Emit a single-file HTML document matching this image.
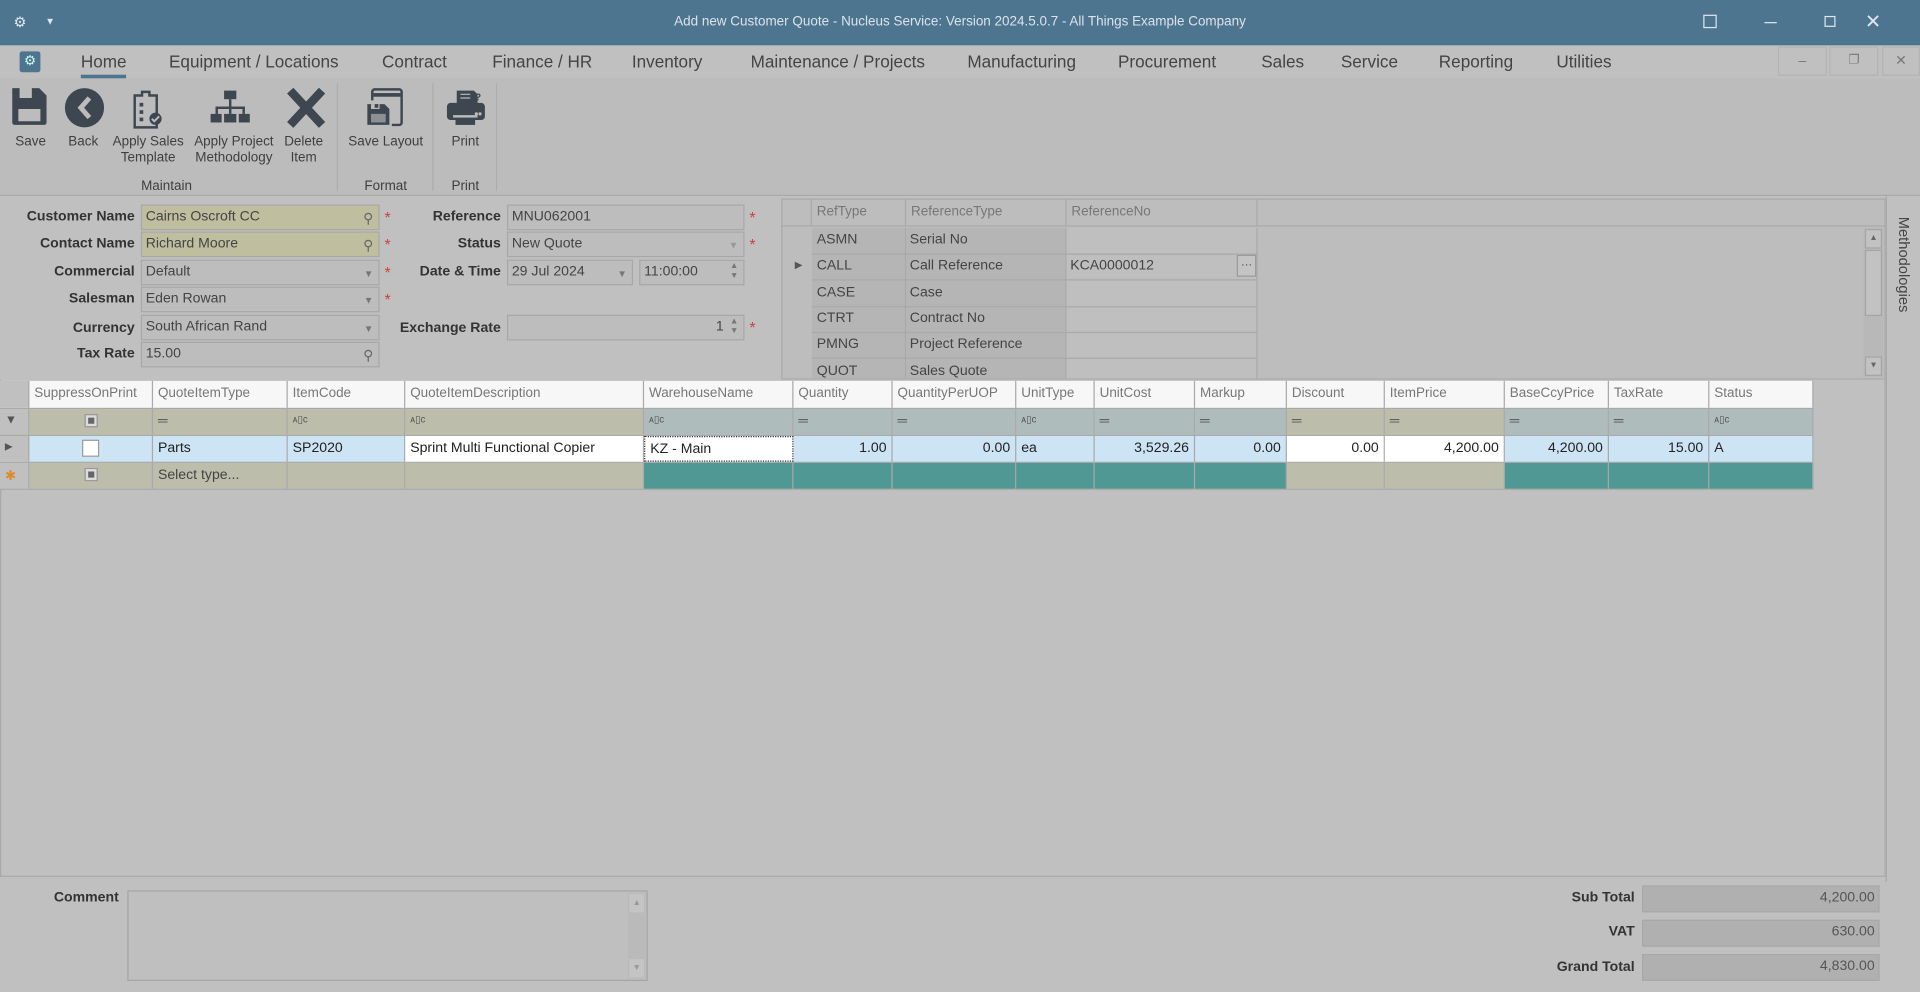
<!DOCTYPE html>
<html><head><meta charset="utf-8"><style>
*{box-sizing:border-box;margin:0;padding:0}
body{width:1920px;height:992px;overflow:hidden;background:#c0c0c0;font-family:"Liberation Sans",Tahoma,sans-serif}
#w{position:absolute;left:0;top:0;width:1568px;height:810px;transform:scale(1.22449,1.22469);transform-origin:0 0;background:#c0c0c0;color:#3a3a3a;font-size:11.5px}
.a{position:absolute}
.tab{position:absolute;top:42px;font-size:14px;color:#444}
.rb{position:absolute;text-align:center;font-size:11px;color:#3f3f3f;line-height:13px}
.lbl{position:absolute;font-weight:bold;text-align:right;width:110px;font-size:11.5px;color:#333}
.lbr{position:absolute;font-weight:bold;text-align:right;font-size:11.5px;color:#333}
.in{position:absolute;height:21px;border:1px solid #a8a8a8;background:#bdbdbd;padding:3px 3px;font-size:11.5px;color:#444;white-space:nowrap}
.ast{position:absolute;color:#d04040;font-size:13px}
.c{position:absolute;height:100%;border-right:1px solid #a9a9a9;padding:4px 4px;white-space:nowrap;overflow:hidden}
.row{position:absolute;left:0;width:1481px}
.r{text-align:right}
.sep{position:absolute;width:1px;background:#adadad}
</style></head><body><div id="w">
<!-- title bar -->
<div class="a" style="left:0;top:0;width:1568px;height:37px;background:#4e7590"></div>
<div class="a" style="left:11px;top:11px;color:#dfe6ec;font-size:12px">⚙</div>
<div class="a" style="left:37px;top:13px;color:#dfe6ec;font-size:8px">▼</div>
<div class="a" style="left:0;top:12px;width:1568px;text-align:center;color:#dbe3ea;font-size:11px">Add new Customer Quote - Nucleus Service: Version 2024.5.0.7 - All Things Example Company</div>
<div class="a" style="left:1391px;top:12px;width:11px;height:11px;border:1px solid #dfe6ec"></div>
<div class="a" style="left:1441px;top:18px;width:10px;height:1px;background:#dfe6ec"></div>
<div class="a" style="left:1490px;top:13px;width:9px;height:9px;border:1px solid #dfe6ec"></div>
<div class="a" style="left:1523px;top:8px;color:#dfe6ec;font-size:16px">✕</div>
<!-- tabs -->
<div class="a" style="left:16px;top:42px;width:17px;height:17px;background:#4e7590;border-radius:2px;color:#cfe;font-size:11px;text-align:center;line-height:17px">⚙</div>
<div class="tab" style="left:66px">Home</div>
<div class="a" style="left:66px;top:61px;width:37px;height:3px;background:#4e7590"></div>
<div class="tab" style="left:138px">Equipment / Locations</div>
<div class="tab" style="left:312px">Contract</div>
<div class="tab" style="left:402px">Finance / HR</div>
<div class="tab" style="left:516px">Inventory</div>
<div class="tab" style="left:613px">Maintenance / Projects</div>
<div class="tab" style="left:790px">Manufacturing</div>
<div class="tab" style="left:913px">Procurement</div>
<div class="tab" style="left:1030px">Sales</div>
<div class="tab" style="left:1095px">Service</div>
<div class="tab" style="left:1175px">Reporting</div>
<div class="tab" style="left:1271px">Utilities</div>
<div class="a" style="left:1452px;top:38px;width:40px;height:24px;border:1px solid #b3b3b3;text-align:center;line-height:22px;color:#777">–</div>
<div class="a" style="left:1494px;top:38px;width:40px;height:24px;border:1px solid #b3b3b3;text-align:center;line-height:22px;color:#777;font-size:10px">❐</div>
<div class="a" style="left:1537px;top:38px;width:31px;height:24px;border:1px solid #b3b3b3;text-align:center;line-height:22px;color:#777">✕</div>
<!-- ribbon -->
<div class="a" style="left:0;top:64px;width:1568px;height:96px;background:#bcbcbc"></div>
<svg class="a" style="left:0;top:64px" width="420" height="50" viewBox="0 0 420 50">
<g fill="#3e4750">
<path d="M10 8h22l6 6v22a2 2 0 0 1-2 2H12a2 2 0 0 1-2-2zM16 8v8h10v-8zM15 25v10h18V25z" fill-rule="evenodd"/>
<circle cx="69" cy="24" r="16"/>
<path d="M110 14h6v-3h6v3h6v26h-18z" fill="none" stroke="#3e4750" stroke-width="2"/>
<rect x="114" y="20" width="3" height="3"/><rect x="114" y="26" width="3" height="3"/><rect x="114" y="32" width="3" height="3"/>
<circle cx="127" cy="33" r="5"/>
<rect x="183" y="10" width="10" height="7"/><rect x="187" y="17" width="2" height="6"/><rect x="176" y="23" width="24" height="2"/>
<rect x="176" y="23" width="2" height="6"/><rect x="187" y="23" width="2" height="6"/><rect x="198" y="23" width="2" height="6"/>
<rect x="172" y="29" width="9" height="7"/><rect x="183" y="29" width="10" height="7"/><rect x="195" y="29" width="9" height="7"/>
</g>
<path d="M73 16l-7 8 7 8" stroke="#bcbcbc" stroke-width="4" fill="none"/>
<path d="M124 33l2 2 4-4" stroke="#bcbcbc" stroke-width="1.6" fill="none"/>
<path d="M237 10l26 28M263 10l-26 28" stroke="#3e4750" stroke-width="7"/>
<!-- save layout -->
<path d="M304 18v-7a2 2 0 0 1 2-2h20a2 2 0 0 1 2 2v25a2 2 0 0 1-2 2h-6" fill="none" stroke="#3e4750" stroke-width="2"/>
<rect x="305" y="12" width="22" height="3" fill="#3e4750"/>
<path d="M300 21h14l4 4v13h-18z" fill="#3e4750"/>
<rect x="303" y="21" width="7" height="4" fill="#bcbcbc"/><rect x="306" y="21" width="3" height="3" fill="#3e4750"/>
<rect x="303" y="29" width="12" height="7" fill="#8a9096"/>
<!-- print -->
<path d="M373 10h14l3 3v8h-17z" fill="#3e4750"/>
<path d="M376 13h8M376 16h8" stroke="#bcbcbc" stroke-width="1"/>
<text x="388" y="18" font-size="8" font-weight="bold" fill="#3e4750" font-family="Liberation Sans">?</text>
<rect x="365" y="20" width="31" height="14" rx="3" fill="#3e4750"/>
<circle cx="389" cy="29" r="1.3" fill="#bcbcbc"/><circle cx="392" cy="29" r="1.3" fill="#bcbcbc"/>
<rect x="370" y="30" width="20" height="2" fill="#bcbcbc"/>
<rect x="372" y="33" width="16" height="5" fill="#3e4750"/>
</svg>
<div class="rb" style="left:5px;top:110px;width:40px">Save</div>
<div class="rb" style="left:48px;top:110px;width:40px">Back</div>
<div class="rb" style="left:88px;top:110px;width:66px">Apply Sales<br>Template</div>
<div class="rb" style="left:154px;top:110px;width:74px">Apply Project<br>Methodology</div>
<div class="rb" style="left:226px;top:110px;width:44px">Delete<br>Item</div>
<div class="rb" style="left:278px;top:110px;width:74px">Save Layout</div>
<div class="rb" style="left:358px;top:110px;width:44px">Print</div>
<div class="rb" style="left:100px;top:146px;width:72px">Maintain</div>
<div class="rb" style="left:278px;top:146px;width:74px">Format</div>
<div class="rb" style="left:358px;top:146px;width:44px">Print</div>
<div class="sep" style="left:275px;top:68px;height:88px"></div>
<div class="sep" style="left:353px;top:68px;height:88px"></div>
<div class="sep" style="left:405px;top:68px;height:88px"></div>
<div class="a" style="left:0;top:159px;width:1568px;height:1px;background:#a9a9a9"></div>
<!-- form -->
<div class="lbl" style="left:0;top:171px">Customer Name</div>
<div class="lbl" style="left:0;top:193px">Contact Name</div>
<div class="lbl" style="left:0;top:216px">Commercial</div>
<div class="lbl" style="left:0;top:238px">Salesman</div>
<div class="lbl" style="left:0;top:262px">Currency</div>
<div class="lbl" style="left:0;top:283px">Tax Rate</div>
<div class="in" style="left:115px;top:167px;width:195px;background:#bfbe9f">Cairns Oscroft CC<span style="position:absolute;right:4px;color:#666">⚲</span></div>
<div class="in" style="left:115px;top:189px;width:195px;background:#bfbe9f">Richard Moore<span style="position:absolute;right:4px;color:#666">⚲</span></div>
<div class="in" style="left:115px;top:212px;width:195px">Default<span style="position:absolute;right:4px;color:#777;font-size:8px;top:6px">▼</span></div>
<div class="in" style="left:115px;top:234px;width:195px">Eden Rowan<span style="position:absolute;right:4px;color:#777;font-size:8px;top:6px">▼</span></div>
<div class="in" style="left:115px;top:257px;width:195px">South African Rand<span style="position:absolute;right:4px;color:#777;font-size:8px;top:6px">▼</span></div>
<div class="in" style="left:115px;top:279px;width:195px">15.00<span style="position:absolute;right:4px;color:#666">⚲</span></div>
<div class="ast" style="left:314px;top:170px">*</div><div class="ast" style="left:314px;top:192px">*</div><div class="ast" style="left:314px;top:215px">*</div><div class="ast" style="left:314px;top:237px">*</div>
<div class="lbr" style="left:300px;width:109px;top:171px">Reference</div>
<div class="lbr" style="left:300px;width:109px;top:193px">Status</div>
<div class="lbr" style="left:300px;width:109px;top:216px">Date &amp; Time</div>
<div class="lbr" style="left:300px;width:109px;top:262px">Exchange Rate</div>
<div class="in" style="left:414px;top:167px;width:194px">MNU062001</div>
<div class="in" style="left:414px;top:189px;width:194px">New Quote<span style="position:absolute;right:4px;color:#999;font-size:8px;top:6px">▼</span></div>
<div class="in" style="left:414px;top:212px;width:103px">29 Jul 2024<span style="position:absolute;right:4px;color:#777;font-size:8px;top:6px">▼</span></div>
<div class="in" style="left:522px;top:212px;width:86px">11:00:00<span style="position:absolute;right:4px;color:#777;font-size:7px;top:1px;line-height:8px">▲<br>▼</span></div>
<div class="in" style="left:414px;top:257px;width:194px;text-align:right;padding-right:16px">1<span style="position:absolute;right:4px;color:#777;font-size:7px;top:1px;line-height:8px">▲<br>▼</span></div>
<div class="ast" style="left:612px;top:170px">*</div><div class="ast" style="left:612px;top:192px">*</div><div class="ast" style="left:612px;top:260px">*</div>
<!-- ref grid -->
<div class="a" style="left:638px;top:162px;width:902px;height:148px;border:1px solid #a9a9a9;background:#bdbdbd"></div>
<div class="a" style="left:639px;top:163px;width:900px;height:22px;border-bottom:1px solid #a9a9a9;color:#777;font-size:11px">
<div class="c" style="left:0;width:24px"></div><div class="c" style="left:24px;width:77px">RefType</div><div class="c" style="left:101px;width:131px">ReferenceType</div><div class="c" style="left:232px;width:156px">ReferenceNo</div></div>
<div class="a" style="left:663px;top:186px;width:364px;height:123px">
<div style="position:absolute;left:0;top:0;width:207px;height:123px;background:#b5b5b5"></div>
<div style="position:absolute;left:207px;top:0;width:157px;height:123px;background:#bfbfbf"></div>
</div>
<div class="a" style="left:663px;top:186px;font-size:11.5px;color:#444;line-height:21.5px">
<div class="a" style="left:4px;top:0">ASMN</div><div class="a" style="left:80px;top:0;white-space:nowrap">Serial No</div>
<div class="a" style="left:4px;top:21px">CALL</div><div class="a" style="left:80px;top:21px;white-space:nowrap">Call Reference</div><div class="a" style="left:211px;top:21px">KCA0000012</div>
<div class="a" style="left:4px;top:43px">CASE</div><div class="a" style="left:80px;top:43px">Case</div>
<div class="a" style="left:4px;top:64px">CTRT</div><div class="a" style="left:80px;top:64px;white-space:nowrap">Contract No</div>
<div class="a" style="left:4px;top:85px">PMNG</div><div class="a" style="left:80px;top:85px;white-space:nowrap">Project Reference</div>
<div class="a" style="left:4px;top:107px">QUOT</div><div class="a" style="left:80px;top:107px;white-space:nowrap">Sales Quote</div>
</div>
<div class="a" style="left:663px;top:207px;width:364px;height:1px;background:#a9a9a9"></div>
<div class="a" style="left:663px;top:228px;width:364px;height:1px;background:#a9a9a9"></div>
<div class="a" style="left:663px;top:250px;width:364px;height:1px;background:#a9a9a9"></div>
<div class="a" style="left:663px;top:271px;width:364px;height:1px;background:#a9a9a9"></div>
<div class="a" style="left:663px;top:292px;width:364px;height:1px;background:#a9a9a9"></div>
<div class="a" style="left:739px;top:186px;width:1px;height:123px;background:#a9a9a9"></div>
<div class="a" style="left:870px;top:186px;width:1px;height:123px;background:#a9a9a9"></div>
<div class="a" style="left:1026px;top:186px;width:1px;height:123px;background:#a9a9a9"></div>
<div class="a" style="left:649px;top:212px;font-size:8px;color:#555">▶</div>
<div class="a" style="left:1010px;top:208px;width:16px;height:18px;border:1px solid #999;background:#c4c4c4;font-size:9px;text-align:center;line-height:14px">···</div>
<div class="a" style="left:1522px;top:186px;width:16px;height:122px;background:#b8b8b8"></div>
<div class="a" style="left:1523px;top:187px;width:14px;height:16px;border:1px solid #a5a5a5;background:#c2c2c2;font-size:7px;text-align:center;line-height:14px;color:#666">▲</div>
<div class="a" style="left:1523px;top:204px;width:14px;height:54px;border:1px solid #a5a5a5;background:#c2c2c2"></div>
<div class="a" style="left:1523px;top:291px;width:14px;height:16px;border:1px solid #a5a5a5;background:#c2c2c2;font-size:7px;text-align:center;line-height:14px;color:#666">▼</div>
<!-- methodologies -->
<div class="a" style="left:1540px;top:160px;width:28px;height:560px;border-left:1px solid #a9a9a9;background:#c0c0c0"></div>
<div class="a" style="left:1548px;top:177px;writing-mode:vertical-rl;font-size:12px;color:#444">Methodologies</div>
<!-- main grid -->
<div class="a" style="left:0;top:310px;width:1540px;height:406px;border:1px solid #a9a9a9;border-top:none;background:#c0c0c0"></div>
<div class="row" style="top:311px;height:23px;background:#f7f7f7;color:#777;font-size:11px;border-bottom:1px solid #a9a9a9">
<div class="c" style="left:0;width:24px;background:#c0c0c0"></div>
<div class="c" style="left:24px;width:101px">SuppressOnPrint</div><div class="c" style="left:125px;width:110px">QuoteItemType</div><div class="c" style="left:235px;width:96px">ItemCode</div><div class="c" style="left:331px;width:195px">QuoteItemDescription</div><div class="c" style="left:526px;width:122px">WarehouseName</div><div class="c" style="left:648px;width:81px">Quantity</div><div class="c" style="left:729px;width:101px">QuantityPerUOP</div><div class="c" style="left:830px;width:64px">UnitType</div><div class="c" style="left:894px;width:82px">UnitCost</div><div class="c" style="left:976px;width:75px">Markup</div><div class="c" style="left:1051px;width:80px">Discount</div><div class="c" style="left:1131px;width:98px">ItemPrice</div><div class="c" style="left:1229px;width:85px">BaseCcyPrice</div><div class="c" style="left:1314px;width:82px">TaxRate</div><div class="c" style="left:1396px;width:85px">Status</div></div>
<div class="row" style="top:334px;height:22px;border-bottom:1px solid #a9a9a9;font-size:11px;color:#555">
<div class="c" style="left:0;width:24px;background:#c0c0c0;font-size:10px">▼</div>
<div class="c" style="left:24px;width:101px;background:#bdbdac;text-align:center"><span style="display:inline-block;width:11px;height:11px;border:1px solid #999;background:#ddd;box-shadow:inset 0 0 0 2px #ddd,inset 0 0 0 6px #666"></span></div>
<div class="c" style="left:125px;width:110px;background:#bdbdac">═</div><div class="c" style="left:235px;width:96px;background:#bdbdac;font-size:8px">ᴀ▯ᴄ</div><div class="c" style="left:331px;width:195px;background:#bdbdac;font-size:8px">ᴀ▯ᴄ</div><div class="c" style="left:526px;width:122px;background:#aebcbc;font-size:8px">ᴀ▯ᴄ</div><div class="c" style="left:648px;width:81px;background:#aebcbc">═</div><div class="c" style="left:729px;width:101px;background:#aebcbc">═</div><div class="c" style="left:830px;width:64px;background:#aebcbc;font-size:8px">ᴀ▯ᴄ</div><div class="c" style="left:894px;width:82px;background:#aebcbc">═</div><div class="c" style="left:976px;width:75px;background:#aebcbc">═</div><div class="c" style="left:1051px;width:80px;background:#bdbdac">═</div><div class="c" style="left:1131px;width:98px;background:#bdbdac">═</div><div class="c" style="left:1229px;width:85px;background:#aebcbc">═</div><div class="c" style="left:1314px;width:82px;background:#aebcbc">═</div><div class="c" style="left:1396px;width:85px;background:#aebcbc;font-size:8px">ᴀ▯ᴄ</div></div>
<div class="row" style="top:356px;height:22px;border-bottom:1px solid #a9a9a9;background:#cde4f5;color:#222;font-size:11.5px">
<div class="c" style="left:0;width:24px;background:#c0c0c0;font-size:8px;color:#555">▶</div>
<div class="c" style="left:24px;width:101px;text-align:center;padding-top:3px"><span style="display:inline-block;width:14px;height:14px;border:1px solid #999;background:#fff"></span></div>
<div class="c" style="left:125px;width:110px">Parts</div><div class="c" style="left:235px;width:96px">SP2020</div><div class="c" style="left:331px;width:195px;background:#fff">Sprint Multi Functional Copier</div><div class="c" style="left:526px;width:122px;background:#fff;border:1px dotted #333">KZ - Main</div><div class="c r" style="left:648px;width:81px">1.00</div><div class="c r" style="left:729px;width:101px">0.00</div><div class="c" style="left:830px;width:64px">ea</div><div class="c r" style="left:894px;width:82px">3,529.26</div><div class="c r" style="left:976px;width:75px">0.00</div><div class="c r" style="left:1051px;width:80px;background:#fff">0.00</div><div class="c r" style="left:1131px;width:98px;background:#fff">4,200.00</div><div class="c r" style="left:1229px;width:85px">4,200.00</div><div class="c r" style="left:1314px;width:82px">15.00</div><div class="c" style="left:1396px;width:85px">A</div></div>
<div class="row" style="top:378px;height:22px;border-bottom:1px solid #a9a9a9;font-size:11.5px;color:#444">
<div class="c" style="left:0;width:24px;background:#c0c0c0;color:#e08a2a;font-size:11px">✱</div>
<div class="c" style="left:24px;width:101px;background:#bdbdac;text-align:center"><span style="display:inline-block;width:11px;height:11px;border:1px solid #999;background:#ddd;box-shadow:inset 0 0 0 2px #ddd,inset 0 0 0 6px #666"></span></div>
<div class="c" style="left:125px;width:110px;background:#bdbdac">Select type...</div><div class="c" style="left:235px;width:96px;background:#bdbdac"></div><div class="c" style="left:331px;width:195px;background:#bdbdac"></div><div class="c" style="left:526px;width:122px;background:#4f9893"></div><div class="c" style="left:648px;width:81px;background:#4f9893"></div><div class="c" style="left:729px;width:101px;background:#4f9893"></div><div class="c" style="left:830px;width:64px;background:#4f9893"></div><div class="c" style="left:894px;width:82px;background:#4f9893"></div><div class="c" style="left:976px;width:75px;background:#4f9893"></div><div class="c" style="left:1051px;width:80px;background:#bdbdac"></div><div class="c" style="left:1131px;width:98px;background:#bdbdac"></div><div class="c" style="left:1229px;width:85px;background:#4f9893"></div><div class="c" style="left:1314px;width:82px;background:#4f9893"></div><div class="c" style="left:1396px;width:85px;background:#4f9893"></div></div>
<!-- bottom -->
<div class="lbr" style="left:0;width:97px;top:727px">Comment</div>
<div class="a" style="left:104px;top:727px;width:425px;height:74px;border:1px solid #a5a5a5;background:#bfbfbf"></div>
<div class="a" style="left:513px;top:729px;width:14px;height:70px;background:#bababa"></div>
<div class="a" style="left:514px;top:730px;width:12px;height:15px;font-size:7px;color:#999;text-align:center;line-height:15px;background:#c4c4c4">▲</div>
<div class="a" style="left:514px;top:783px;width:12px;height:15px;font-size:7px;color:#999;text-align:center;line-height:15px;background:#c4c4c4">▼</div>
<div class="lbr" style="left:1200px;width:135px;top:727px">Sub Total</div>
<div class="lbr" style="left:1200px;width:135px;top:755px">VAT</div>
<div class="lbr" style="left:1200px;width:135px;top:784px">Grand Total</div>
<div class="in" style="left:1341px;top:723px;width:194px;height:22px;background:#b0b0b0;text-align:right;color:#555">4,200.00</div>
<div class="in" style="left:1341px;top:751px;width:194px;height:22px;background:#b0b0b0;text-align:right;color:#555">630.00</div>
<div class="in" style="left:1341px;top:779px;width:194px;height:22px;background:#b0b0b0;text-align:right;color:#555">4,830.00</div>
</div></body></html>
